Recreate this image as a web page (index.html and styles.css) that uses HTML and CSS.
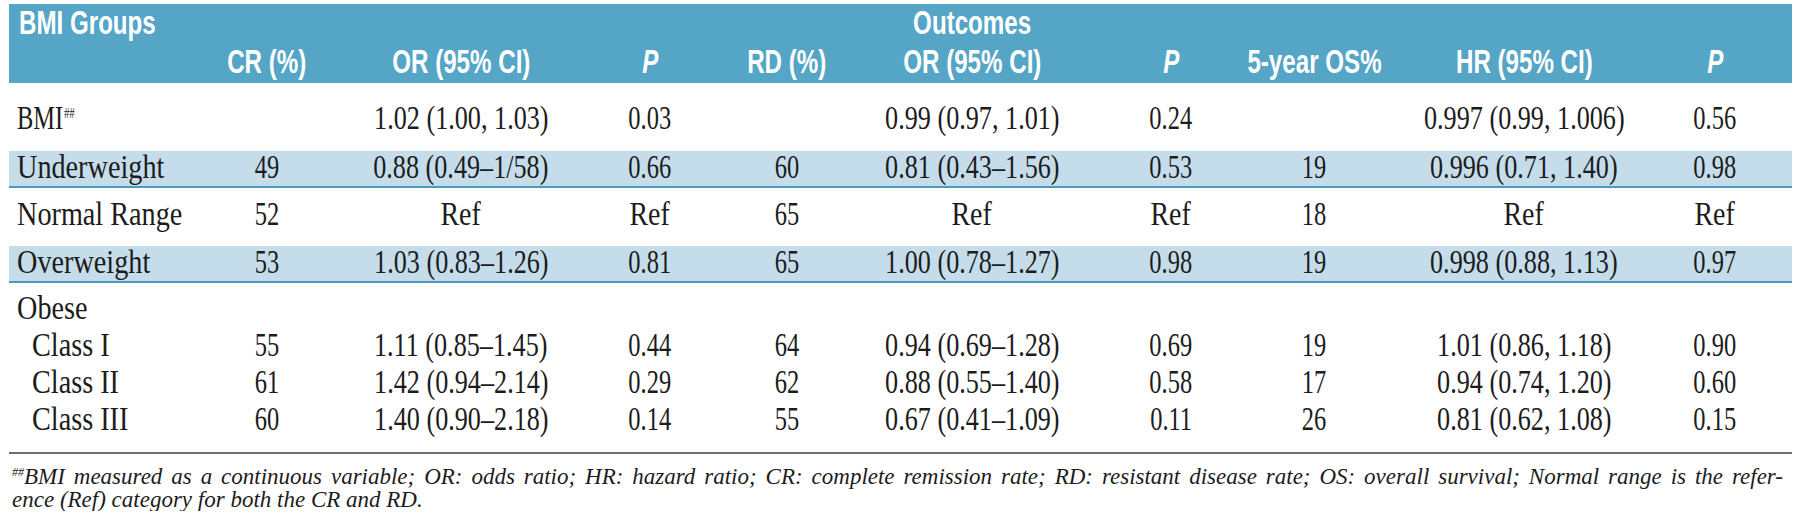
FILE: index.html
```html
<!DOCTYPE html>
<html lang="en">
<head>
<meta charset="utf-8">
<title>BMI groups and outcomes</title>
<link rel="stylesheet" href="styles.css">
</head>
<body>
<table class="bmi">
  <colgroup>
    <col class="w-lbl"><col class="w-cr"><col class="w-or"><col class="w-p1"><col class="w-rd">
    <col class="w-or2"><col class="w-p2"><col class="w-os"><col class="w-hr"><col class="w-p3">
  </colgroup>
  <thead>
    <tr class="h1">
      <th class="lbl"><span class="hx hl">BMI Groups</span></th>
      <th></th><th></th><th></th><th></th>
      <th><span class="hx">Outcomes</span></th>
      <th></th><th></th><th></th><th></th>
    </tr>
    <tr class="h2">
      <th class="lbl"></th>
      <th><span class="hx">CR (%)</span></th>
      <th><span class="hx">OR (95% CI)</span></th>
      <th><span class="hx"><i>P</i></span></th>
      <th><span class="hx">RD (%)</span></th>
      <th><span class="hx">OR (95% CI)</span></th>
      <th><span class="hx"><i>P</i></span></th>
      <th><span class="hx">5-year OS%</span></th>
      <th><span class="hx">HR (95% CI)</span></th>
      <th><span class="hx"><i>P</i></span></th>
    </tr>
  </thead>
  <tbody>
    <tr class="r-bmi">
      <td class="lbl"><span class="lb lb-bmi">BMI<sup>##</sup></span></td>
      <td></td>
      <td><span class="ci">1.02 (1.00, 1.03)</span></td>
      <td><span class="n">0.03</span></td>
      <td></td>
      <td><span class="ci">0.99 (0.97, 1.01)</span></td>
      <td><span class="n">0.24</span></td>
      <td></td>
      <td><span class="ci">0.997 (0.99, 1.006)</span></td>
      <td><span class="n">0.56</span></td>
    </tr>
    <tr class="r-band">
      <td class="lbl"><span class="lb">Underweight</span></td>
      <td><span class="n">49</span></td>
      <td><span class="ci">0.88 (0.49–1/58)</span></td>
      <td><span class="n">0.66</span></td>
      <td><span class="n">60</span></td>
      <td><span class="ci">0.81 (0.43–1.56)</span></td>
      <td><span class="n">0.53</span></td>
      <td><span class="n">19</span></td>
      <td><span class="ci">0.996 (0.71, 1.40)</span></td>
      <td><span class="n">0.98</span></td>
    </tr>
    <tr class="r-norm">
      <td class="lbl"><span class="lb">Normal Range</span></td>
      <td><span class="n">52</span></td>
      <td><span class="rf">Ref</span></td>
      <td><span class="rf">Ref</span></td>
      <td><span class="n">65</span></td>
      <td><span class="rf">Ref</span></td>
      <td><span class="rf">Ref</span></td>
      <td><span class="n">18</span></td>
      <td><span class="rf">Ref</span></td>
      <td><span class="rf">Ref</span></td>
    </tr>
    <tr class="r-band">
      <td class="lbl"><span class="lb">Overweight</span></td>
      <td><span class="n">53</span></td>
      <td><span class="ci">1.03 (0.83–1.26)</span></td>
      <td><span class="n">0.81</span></td>
      <td><span class="n">65</span></td>
      <td><span class="ci">1.00 (0.78–1.27)</span></td>
      <td><span class="n">0.98</span></td>
      <td><span class="n">19</span></td>
      <td><span class="ci">0.998 (0.88, 1.13)</span></td>
      <td><span class="n">0.97</span></td>
    </tr>
    <tr class="r-obese">
      <td class="lbl"><span class="lb">Obese</span></td>
      <td></td><td></td><td></td><td></td><td></td><td></td><td></td><td></td><td></td>
    </tr>
    <tr class="r-cls">
      <td class="lbl sub"><span class="lb">Class I</span></td>
      <td><span class="n">55</span></td>
      <td><span class="ci">1.11 (0.85–1.45)</span></td>
      <td><span class="n">0.44</span></td>
      <td><span class="n">64</span></td>
      <td><span class="ci">0.94 (0.69–1.28)</span></td>
      <td><span class="n">0.69</span></td>
      <td><span class="n">19</span></td>
      <td><span class="ci">1.01 (0.86, 1.18)</span></td>
      <td><span class="n">0.90</span></td>
    </tr>
    <tr class="r-cls">
      <td class="lbl sub"><span class="lb">Class II</span></td>
      <td><span class="n">61</span></td>
      <td><span class="ci">1.42 (0.94–2.14)</span></td>
      <td><span class="n">0.29</span></td>
      <td><span class="n">62</span></td>
      <td><span class="ci">0.88 (0.55–1.40)</span></td>
      <td><span class="n">0.58</span></td>
      <td><span class="n">17</span></td>
      <td><span class="ci">0.94 (0.74, 1.20)</span></td>
      <td><span class="n">0.60</span></td>
    </tr>
    <tr class="r-cls r-last">
      <td class="lbl sub"><span class="lb">Class III</span></td>
      <td><span class="n">60</span></td>
      <td><span class="ci">1.40 (0.90–2.18)</span></td>
      <td><span class="n">0.14</span></td>
      <td><span class="n">55</span></td>
      <td><span class="ci">0.67 (0.41–1.09)</span></td>
      <td><span class="n">0.11</span></td>
      <td><span class="n">26</span></td>
      <td><span class="ci">0.81 (0.62, 1.08)</span></td>
      <td><span class="n">0.15</span></td>
    </tr>
  </tbody>
</table>
<div class="note">
  <p class="note-l1"><sup>##</sup>BMI measured as a continuous variable; OR: odds ratio; HR: hazard ratio; CR: complete remission rate; RD: resistant disease rate; OS: overall survival; Normal range is the refer-</p>
  <p class="note-l2">ence (Ref) category for both the CR and RD.</p>
</div>
</body>
</html>
```

FILE: styles.css
```css
html, body {
  background: #ffffff;
}

body {
  margin: 4px 8px 0 9px;
  color: #1c1c1c;
  font-family: "Liberation Serif", "Times New Roman", serif;
}

.bmi {
  width: 1783px;
  table-layout: fixed;
  border-collapse: separate;
  border-spacing: 0;
}

.w-lbl { width: 149px; }
.w-cr  { width: 218px; }
.w-or  { width: 170px; }
.w-p1  { width: 208px; }
.w-rd  { width: 66px; }
.w-or2 { width: 304px; }
.w-p2  { width: 94px; }
.w-os  { width: 192px; }
.w-hr  { width: 228px; }
.w-p3  { width: 154px; }

/* header band */
.bmi th {
  background: #55a5c7;
  color: #ffffff;
  font-family: "Liberation Sans", Arial, sans-serif;
  font-weight: 700;
  font-size: 34px;
  line-height: 30px;
  text-align: center;
  white-space: nowrap;
  vertical-align: top;
  padding: 0;
}

.bmi .h1 th { padding: 3px 0 7px; }
.bmi .h2 th { padding: 2px 0 7px; }

.bmi th.lbl { text-align: left; padding-left: 10px; }

.hx {
  display: inline-block;
  margin: 0 -80px;
  transform: scaleX(0.71);
}

.hx.hl {
  margin: 0;
  transform-origin: left center;
}

.hx i { font-style: italic; }

/* body cells */
.bmi td {
  font-size: 34px;
  line-height: 30px;
  text-align: center;
  white-space: nowrap;
  vertical-align: top;
  padding: 0;
}

.bmi td.lbl { text-align: left; padding-left: 8px; }
.bmi td.lbl.sub { padding-left: 23px; }

.n, .ci, .rf, .lb {
  display: inline-block;
}

.n  { margin: 0 -60px; transform: scaleX(0.72); }
.ci { margin: 0 -80px; transform: scaleX(0.77); }
.rf { margin: 0 -60px; transform: scaleX(0.82); }

.lb {
  transform: scaleX(0.83);
  transform-origin: left center;
}

.lb.lb-bmi { transform: scaleX(0.72); }

.lb sup {
  font-size: 15px;
  line-height: 0;
  vertical-align: 11px;
  margin-left: 1px;
}

.r-bmi td   { padding-top: 20px; padding-bottom: 18px; }
.r-band td  { padding-top: 1px; padding-bottom: 4px; background: #c5ddeb; border-bottom: 2px solid #4a9cbf; }
.r-norm td  { padding-top: 11px; padding-bottom: 17px; }
.r-obese td { padding-top: 10px; }
.r-cls td   { padding-top: 7px; }
.r-last td  { padding-bottom: 18px; border-bottom: 2px solid #6f6f6f; }

/* footnote */
.note {
  margin-top: 11px;
  padding: 0 9px 0 3px;
  font-style: italic;
  font-size: 23px;
  line-height: 23px;
  color: #1c1c1c;
}

.note p { margin: 0; }

.note-l1 {
  text-align: justify;
  text-align-last: justify;
}

.note sup {
  font-size: 12px;
  line-height: 0;
  vertical-align: 8px;
}
```
